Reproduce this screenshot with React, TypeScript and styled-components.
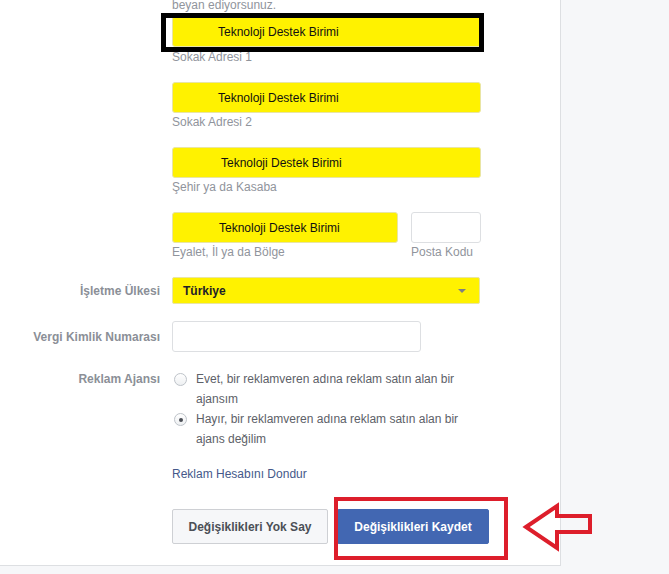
import React from "react";
import styled, { createGlobalStyle } from "styled-components";

const Global = createGlobalStyle`
  html, body { margin: 0; padding: 0; }
  body {
    background: #f6f7f9;
    font-family: "Liberation Sans", Arial, Helvetica, sans-serif;
    font-size: 12px;
    overflow: hidden;
  }
`;

const Page = styled.div`
  display: flex;
  align-items: flex-start;
  min-height: 574px;
  background: #f6f7f9;
`;

const Panel = styled.div`
  width: 560px;
  background: #ffffff;
  border-right: 1px solid #dddfe2;
  border-bottom: 1px solid #dddfe2;
  padding-bottom: 21px;
`;

const Intro = styled.div`
  margin: -3px 0 3px 172px;
  line-height: 16px;
  color: #90949c;
`;

const Form = styled.div`
  display: grid;
  grid-template-columns: 160px 309px;
  column-gap: 12px;
  row-gap: 17px;
`;

const Label = styled.div<{ $top?: boolean }>`
  grid-column: 1;
  text-align: right;
  font-weight: bold;
  color: #8b8f97;
  line-height: 16px;
  align-self: ${(p) => (p.$top ? "start" : "center")};
  padding-top: ${(p) => (p.$top ? "2px" : "0")};
`;

const Cell = styled.div`
  grid-column: 2;
  position: relative;
`;

const Group = styled.div`
  display: flex;
  flex-direction: column;
  position: relative;
`;

const Pair = styled.div`
  display: flex;
  gap: 13px;
`;

const YellowField = styled.div<{ $indent: number; $w?: number }>`
  box-sizing: border-box;
  width: ${(p) => (p.$w ? `${p.$w}px` : "100%")};
  height: 31px;
  background: #fff200;
  border: 1px solid #e9e5a4;
  border-radius: 3px;
  display: flex;
  align-items: center;
  padding-left: ${(p) => p.$indent}px;
  color: #111111;
  line-height: 16px;
`;

const EmptyField = styled.div<{ $w: number }>`
  box-sizing: border-box;
  width: ${(p) => p.$w}px;
  height: 31px;
  background: #ffffff;
  border: 1px solid #dddfe2;
  border-radius: 3px;
`;

const SubLabel = styled.div<{ $gap?: number }>`
  margin-top: ${(p) => p.$gap ?? 1}px;
  line-height: 16px;
  color: #90949c;
`;

const Highlight = styled.div`
  position: absolute;
  top: -3px;
  bottom: -5px;
  left: -11px;
  right: -3px;
  border: 5px solid #000000;
  pointer-events: none;
`;

const FieldWrap = styled.div`
  position: relative;
`;

const Select = styled.div`
  box-sizing: border-box;
  width: 308px;
  height: 27px;
  background: #fff200;
  border: 1px solid #e9e5a4;
  border-radius: 2px;
  display: flex;
  align-items: center;
  justify-content: space-between;
  padding: 0 13px 0 10px;
  font-weight: bold;
  color: #1d2129;
`;

const Caret = styled.span`
  width: 0;
  height: 0;
  border-left: 4px solid transparent;
  border-right: 4px solid transparent;
  border-top: 4px solid #7d7f83;
`;

const RadioList = styled.div`
  display: flex;
  flex-direction: column;
`;

const RadioItem = styled.div`
  display: flex;
  align-items: flex-start;
`;

const RadioDot = styled.span<{ $checked?: boolean }>`
  box-sizing: border-box;
  flex: none;
  width: 13px;
  height: 13px;
  margin: 4px 9px 0 2px;
  border: 1px solid #bec3c9;
  border-radius: 50%;
  background: linear-gradient(#ffffff, #eef0f2);
  display: flex;
  align-items: center;
  justify-content: center;
  &::after {
    content: "";
    display: ${(p) => (p.$checked ? "block" : "none")};
    width: 4px;
    height: 4px;
    border-radius: 50%;
    background: #4b4f56;
  }
`;

const RadioText = styled.div`
  line-height: 20px;
  color: #5d6168;
`;

const Link = styled.a`
  display: block;
  line-height: 16px;
  color: #45598a;
  text-decoration: none;
`;

const Buttons = styled.div`
  grid-column: 2;
  display: flex;
  gap: 9px;
  margin-top: 10px;
`;

const Button = styled.button<{ $primary?: boolean; $w: number }>`
  position: relative;
  flex: none;
  box-sizing: border-box;
  width: ${(p) => p.$w}px;
  height: 35px;
  padding: 0;
  border-radius: 2px;
  border: 1px solid ${(p) => (p.$primary ? "#4267b2" : "#ced0d4")};
  background: ${(p) => (p.$primary ? "#4267b2" : "#f6f7f9")};
  color: ${(p) => (p.$primary ? "#ffffff" : "#4b4f56")};
  font-family: "Liberation Sans", Arial, Helvetica, sans-serif;
  font-size: 12px;
  font-weight: bold;
  cursor: pointer;
`;

const RedBox = styled.span`
  position: absolute;
  top: -13px;
  left: -4px;
  right: -20px;
  bottom: -17px;
  border: 4px solid #dd1e2b;
  pointer-events: none;
`;

const ArrowSvg = styled.svg`
  position: absolute;
  left: 182px;
  top: -9px;
  overflow: visible;
  pointer-events: none;
`;

const addressRows = [
  { label: "Sokak Adresi 2", indent: 45 },
  { label: "Şehir ya da Kasaba", indent: 48 },
];

export default function App() {
  return (
    <>
      <Global />
      <Page>
        <Panel>
          <Intro>beyan ediyorsunuz.</Intro>
          <Form>
            <Cell>
              <Group>
                <FieldWrap>
                  <YellowField $indent={45}>Teknoloji Destek Birimi</YellowField>
                  <Highlight />
                </FieldWrap>
                <SubLabel $gap={2}>Sokak Adresi 1</SubLabel>
              </Group>
            </Cell>
            {addressRows.map((r) => (
              <Cell key={r.label}>
                <Group>
                  <YellowField $indent={r.indent}>Teknoloji Destek Birimi</YellowField>
                  <SubLabel>{r.label}</SubLabel>
                </Group>
              </Cell>
            ))}
            <Cell>
              <Pair>
                <Group>
                  <YellowField $indent={46} $w={226}>Teknoloji Destek Birimi</YellowField>
                  <SubLabel>Eyalet, İl ya da Bölge</SubLabel>
                </Group>
                <Group>
                  <EmptyField $w={70} />
                  <SubLabel>Posta Kodu</SubLabel>
                </Group>
              </Pair>
            </Cell>

            <Label>İşletme Ülkesi</Label>
            <Cell>
              <Select>
                <span>Türkiye</span>
                <Caret />
              </Select>
            </Cell>

            <Label>Vergi Kimlik Numarası</Label>
            <Cell>
              <EmptyField $w={249} />
            </Cell>

            <Label $top>Reklam Ajansı</Label>
            <Cell>
              <RadioList>
                <RadioItem>
                  <RadioDot />
                  <RadioText>Evet, bir reklamveren adına reklam satın alan bir ajansım</RadioText>
                </RadioItem>
                <RadioItem>
                  <RadioDot $checked />
                  <RadioText>Hayır, bir reklamveren adına reklam satın alan bir ajans değilim</RadioText>
                </RadioItem>
              </RadioList>
            </Cell>

            <Cell>
              <Link href="#">Reklam Hesabını Dondur</Link>
            </Cell>

            <Buttons>
              <Button $w={156}>Değişiklikleri Yok Say</Button>
              <Button $primary $w={152}>
                Değişiklikleri Kaydet
                <RedBox />
                <ArrowSvg width="74" height="52" viewBox="0 0 74 52">
                  <polygon
                    points="6,26 37,5 37,15 70,15 70,31 37,31 37,47"
                    fill="none"
                    stroke="#dd1e2b"
                    strokeWidth="4"
                    strokeLinejoin="miter"
                  />
                </ArrowSvg>
              </Button>
            </Buttons>
          </Form>
        </Panel>
      </Page>
    </>
  );
}
